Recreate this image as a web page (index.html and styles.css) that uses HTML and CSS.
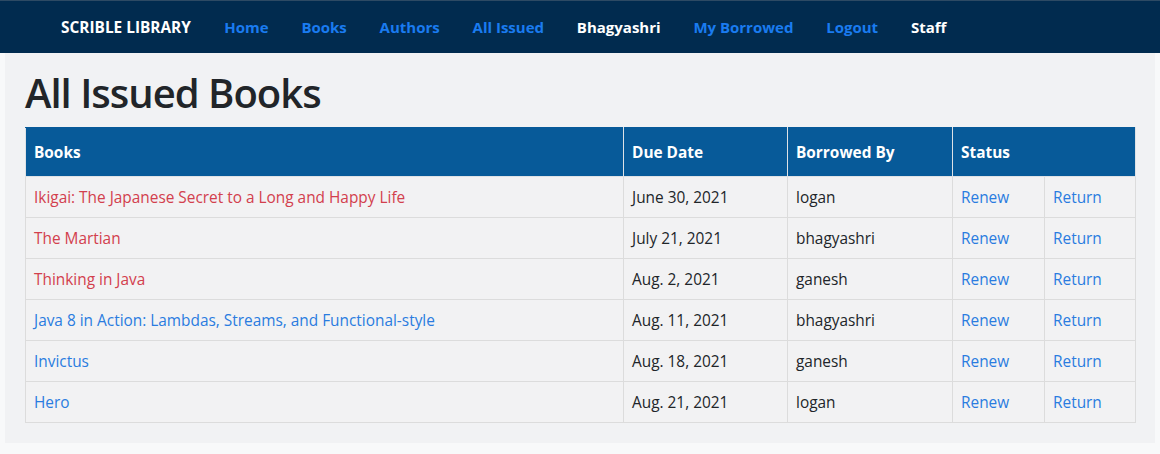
FILE: index.html
```html
<!DOCTYPE html>
<html lang="en">
<head>
<meta charset="utf-8">
<title>All Issued Books</title>
<link rel="stylesheet" href="styles.css">
</head>
<body>
<nav class="navbar">
  <a class="brand" href="#">SCRIBLE LIBRARY</a>
  <ul class="nav">
    <li><a class="nav-link" href="#">Home</a></li>
    <li><a class="nav-link" href="#">Books</a></li>
    <li><a class="nav-link" href="#">Authors</a></li>
    <li><a class="nav-link" href="#">All Issued</a></li>
    <li><span class="nav-text">Bhagyashri</span></li>
    <li><a class="nav-link" href="#">My Borrowed</a></li>
    <li><a class="nav-link" href="#">Logout</a></li>
    <li><span class="nav-text">Staff</span></li>
  </ul>
</nav>
<main class="content">
  <h1 class="title">All Issued Books</h1>
  <table class="issued">
    <thead>
      <tr>
        <th class="c-book">Books</th>
        <th class="c-date">Due Date</th>
        <th class="c-user">Borrowed By</th>
        <th colspan="2">Status</th>
      </tr>
    </thead>
    <tbody>
      <tr>
        <td><a class="overdue" href="#">Ikigai: The Japanese Secret to a Long and Happy Life</a></td>
        <td>June 30, 2021</td>
        <td>logan</td>
        <td class="c-renew"><a href="#">Renew</a></td>
        <td><a href="#">Return</a></td>
      </tr>
      <tr>
        <td><a class="overdue" href="#">The Martian</a></td>
        <td>July 21, 2021</td>
        <td>bhagyashri</td>
        <td class="c-renew"><a href="#">Renew</a></td>
        <td><a href="#">Return</a></td>
      </tr>
      <tr>
        <td><a class="overdue" href="#">Thinking in Java</a></td>
        <td>Aug. 2, 2021</td>
        <td>ganesh</td>
        <td class="c-renew"><a href="#">Renew</a></td>
        <td><a href="#">Return</a></td>
      </tr>
      <tr>
        <td><a href="#">Java 8 in Action: Lambdas, Streams, and Functional-style</a></td>
        <td>Aug. 11, 2021</td>
        <td>bhagyashri</td>
        <td class="c-renew"><a href="#">Renew</a></td>
        <td><a href="#">Return</a></td>
      </tr>
      <tr>
        <td><a href="#">Invictus</a></td>
        <td>Aug. 18, 2021</td>
        <td>ganesh</td>
        <td class="c-renew"><a href="#">Renew</a></td>
        <td><a href="#">Return</a></td>
      </tr>
      <tr>
        <td><a href="#">Hero</a></td>
        <td>Aug. 21, 2021</td>
        <td>logan</td>
        <td class="c-renew"><a href="#">Renew</a></td>
        <td><a href="#">Return</a></td>
      </tr>
    </tbody>
  </table>
</main>
</body>
</html>
```

FILE: styles.css
```css
* { box-sizing: border-box; }
html, body { margin: 0; padding: 0; }
body {
  background: #f8f9fa;
  font-family: "Open Sans", "Noto Sans", sans-serif;
  color: #212529;
  font-size: 15.4px;
}
a { text-decoration: none; }

.navbar {
  display: flex;
  align-items: center;
  height: 53px;
  background: #012b4f;
  border-top: 1px solid #2d4a64;
  padding: 0 0 0 61px;
}
.brand {
  color: #fff;
  font-weight: 700;
  font-size: 15.4px;
  margin-right: 17px;
}
.nav {
  display: flex;
  list-style: none;
  margin: 0;
  padding: 0;
}
.nav li { padding: 0 16.4px; }
.nav-link {
  color: #1a7bf0;
  font-weight: 700;
  font-size: 15px;
}
.nav-text {
  color: #fff;
  font-weight: 700;
  font-size: 15px;
}

.content {
  margin: 0 5px 12px 5px;
  background: #f1f2f4;
  padding: 13px 19px 20px 20px;
}
.title {
  margin: 0 0 7px 0;
  font-size: 40px;
  font-weight: 600;
  line-height: 54px;
  letter-spacing: -1px;
  color: #212529;
}

.issued {
  width: 100%;
  border-collapse: collapse;
  background: #f2f2f3;
}
.issued th {
  background: #075a99;
  color: #fff;
  font-weight: 700;
  text-align: left;
  height: 49px;
  padding: 0 8px;
  border: 1px solid #dee2e6;
  border-top-color: #075a99;
}
.issued td {
  height: 41px;
  padding: 0 8px;
  border: 1px solid #dcdcdc;
}
.issued td a { color: #2a7ce0; }
.issued td a.overdue { color: #d2404d; }
.c-book { width: 598px; }
.c-date { width: 164px; }
.c-user { width: 165px; }
.c-renew { width: 92px; }
```
